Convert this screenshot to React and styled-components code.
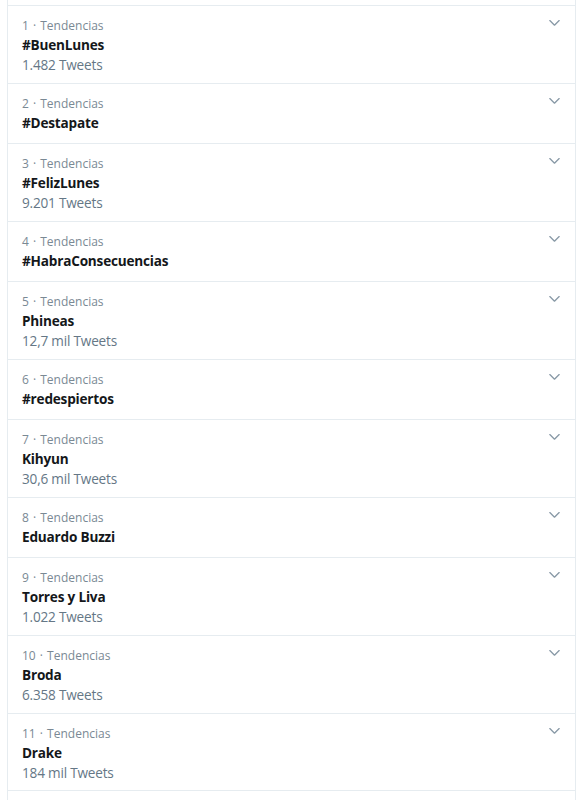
import React from "react";
import styled, { createGlobalStyle } from "styled-components";

const GlobalStyle = createGlobalStyle`
  body {
    margin: 0;
    background: #ffffff;
    font-family: "Open Sans", "Noto Sans", "Liberation Sans", sans-serif;
  }
`

const Page = styled.div`
  width: 584px;
  height: 800px;
  overflow: hidden;
  padding-left: 7px;
  box-sizing: border-box;
`

const List = styled.div`
  width: 569px;
  min-height: 800px;
  padding-top: 5px;
  border-left: 1px solid #e6ecf0;
  border-right: 1px solid #e6ecf0;
  box-sizing: border-box;
`

const Row = styled.div`
  display: flex;
  justify-content: space-between;
  align-items: flex-start;
  border-top: 1px solid #e6ecf0;
  border-bottom: ${props => (props.$last ? "1px solid #e6ecf0" : "none")};
  padding: 10px 12px 0 14px;
  height: ${props => (props.$short ? "60px" : "78px")};
  box-sizing: border-box;
`

const Info = styled.div`
  display: flex;
  flex-direction: column;
`

const Meta = styled.div`
  font-size: 12px;
  line-height: 19px;
  color: #7a8994;
  word-spacing: 1px;
`

const Title = styled.div`
  font-size: 13.6px;
  line-height: 20px;
  font-weight: 700;
  color: #14171a;
  letter-spacing: -0.2px;
`

const Count = styled.div`
  font-size: 13.6px;
  line-height: 20px;
  color: #657786;
  letter-spacing: -0.2px;
`

const Caret = styled.div`
  width: 18px;
  height: 18px;
  margin-top: -3px;
  color: #8899a6;
  display: flex;
  align-items: center;
  justify-content: center;
`

const ChevronDown = () => (
  <svg viewBox="0 0 24 24" width="15" height="15" fill="currentColor">
    <path d="M20.207 8.147c-.39-.39-1.023-.39-1.414 0L12 14.94 5.207 8.147c-.39-.39-1.023-.39-1.414 0-.39.39-.39 1.023 0 1.414l7.5 7.5c.195.196.45.294.707.294s.512-.098.707-.293l7.5-7.5c.39-.39.39-1.023 0-1.414z" />
  </svg>
)

const trends = [
  { name: "#BuenLunes", tweets: "1.482 Tweets" },
  { name: "#Destapate" },
  { name: "#FelizLunes", tweets: "9.201 Tweets" },
  { name: "#HabraConsecuencias" },
  { name: "Phineas", tweets: "12,7 mil Tweets" },
  { name: "#redespiertos" },
  { name: "Kihyun", tweets: "30,6 mil Tweets" },
  { name: "Eduardo Buzzi" },
  { name: "Torres y Liva", tweets: "1.022 Tweets" },
  { name: "Broda", tweets: "6.358 Tweets" },
  { name: "Drake", tweets: "184 mil Tweets" },
]

export default function App() {
  return (
    <Page>
      <GlobalStyle />
      <List>
        {trends.map((t, i) => (
          <Row key={i} $short={!t.tweets} $last={i === trends.length - 1}>
            <Info>
              <Meta>{i + 1} · Tendencias</Meta>
              <Title>{t.name}</Title>
              {t.tweets && <Count>{t.tweets}</Count>}
            </Info>
            <Caret>
              <ChevronDown />
            </Caret>
          </Row>
        ))}
      </List>
    </Page>
  )
}
